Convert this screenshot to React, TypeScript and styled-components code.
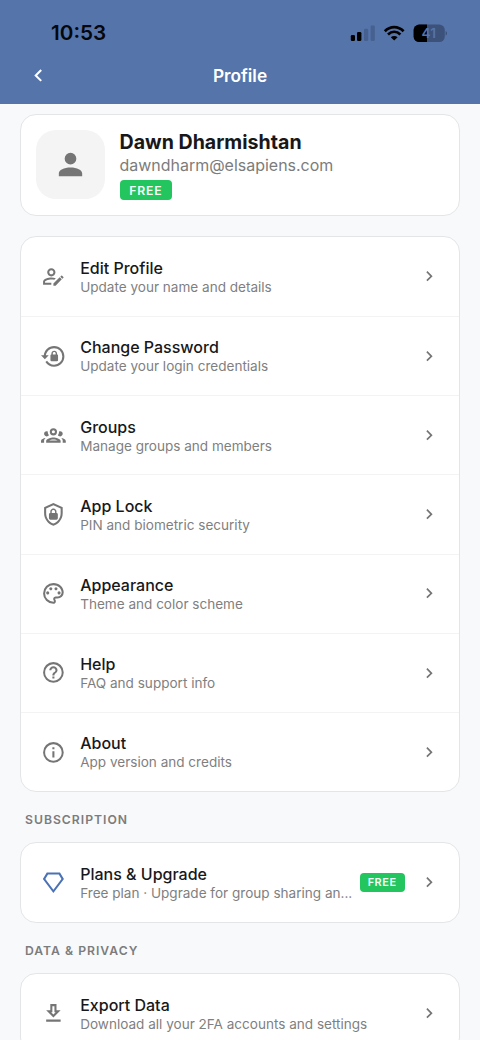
import React from 'react';
import styled, { createGlobalStyle } from 'styled-components';

const GlobalStyle = createGlobalStyle`
  * { box-sizing: border-box; }
  html, body { margin: 0; padding: 0; }
  body {
    height: 1040px;
    overflow: hidden;
    background: #f8f9fb;
    font-family: Inter, "Liberation Sans", sans-serif;
  }
`;

const icons = {
  account:
    'M12,4A4,4 0 0,1 16,8A4,4 0 0,1 12,12A4,4 0 0,1 8,8A4,4 0 0,1 12,4M12,14C16.42,14 20,15.79 20,18V20H4V18C4,15.79 7.58,14 12,14Z',
  accountEdit:
    'M2 17V20H10V18.11H3.9V17C3.9 16.36 7.03 14.9 10 14.9C10.96 14.91 11.91 15.04 12.83 15.28L14.35 13.76C12.95 13.29 11.5 13.03 10 13C7.33 13 2 14.33 2 17M10 4C7.79 4 6 5.79 6 8S7.79 12 10 12 14 10.21 14 8 12.21 4 10 4M10 10C8.9 10 8 9.11 8 8S8.9 6 10 6 12 6.9 12 8 11.11 10 10 10M21.7 13.35L20.7 14.35L18.65 12.35L19.65 11.35C19.86 11.14 20.21 11.14 20.42 11.35L21.7 12.63C21.91 12.84 21.91 13.14 21.7 13.35M12 18.94L18.06 12.88L20.11 14.88L14.11 20.95H12V18.94Z',
  lockReset:
    'M12.63,2C18.16,2 22.64,6.5 22.64,12C22.64,17.5 18.16,22 12.63,22C9.12,22 6.05,20.18 4.26,17.43L5.84,16.18C7.25,18.47 9.76,20 12.64,20A8,8 0 0,0 20.64,12A8,8 0 0,0 12.64,4C8.56,4 5.2,7.06 4.71,11H7.47L3.73,14.73L0,11H2.69C3.19,5.95 7.45,2 12.63,2M15.59,10.24C16.09,10.25 16.5,10.65 16.5,11.16V15.77C16.5,16.27 16.09,16.69 15.58,16.69H10.05C9.54,16.69 9.13,16.27 9.13,15.77V11.16C9.13,10.65 9.54,10.25 10.04,10.24V9.23C10.04,7.7 11.29,6.46 12.81,6.46C14.34,6.46 15.59,7.7 15.59,9.23V10.24M12.81,7.86C12.06,7.86 11.44,8.47 11.44,9.23V10.24H14.19V9.23C14.19,8.47 13.57,7.86 12.81,7.86Z',
  group:
    'M12,5A3.5,3.5 0 0,0 8.5,8.5A3.5,3.5 0 0,0 12,12A3.5,3.5 0 0,0 15.5,8.5A3.5,3.5 0 0,0 12,5M12,7A1.5,1.5 0 0,1 13.5,8.5A1.5,1.5 0 0,1 12,10A1.5,1.5 0 0,1 10.5,8.5A1.5,1.5 0 0,1 12,7M5.5,8A2.5,2.5 0 0,0 3,10.5C3,11.44 3.53,12.25 4.29,12.68C4.65,12.88 5.06,13 5.5,13C5.94,13 6.35,12.88 6.71,12.68C7.08,12.47 7.39,12.17 7.62,11.81C6.89,10.86 6.5,9.7 6.5,8.5C6.5,8.41 6.5,8.31 6.5,8.22C6.2,8.08 5.86,8 5.5,8M18.5,8C18.14,8 17.8,8.08 17.5,8.22C17.5,8.31 17.5,8.41 17.5,8.5C17.5,9.7 17.11,10.86 16.38,11.81C16.5,12 16.63,12.15 16.78,12.3C16.94,12.45 17.1,12.58 17.29,12.68C17.65,12.88 18.06,13 18.5,13C18.94,13 19.35,12.88 19.71,12.68C20.47,12.25 21,11.44 21,10.5A2.5,2.5 0 0,0 18.5,8M12,14C9.66,14 5,15.17 5,17.5V19H19V17.5C19,15.17 14.34,14 12,14M4.71,14.55C2.78,14.78 0,15.76 0,17.5V19H3V17.07C3,16.06 3.69,15.22 4.71,14.55M19.29,14.55C20.31,15.22 21,16.06 21,17.07V19H24V17.5C24,15.76 21.22,14.78 19.29,14.55M12,16C13.53,16 15.24,16.5 16.23,17H7.77C8.76,16.5 10.47,16 12,16Z',
  shieldLock:
    'M12,1L3,5V11C3,16.55 6.84,21.74 12,23C17.16,21.74 21,16.55 21,11V5L12,1M12,3.18L19,6.3V11C19,15.52 16.02,19.69 12,20.93C7.98,19.69 5,15.52 5,11V6.3L12,3.18M12,6.4C13.6,6.4 15,7.7 15,9.3V10.6C15.8,10.6 16.3,11.2 16.3,12V15.8C16.3,16.6 15.7,17.2 14.9,17.2H9.1C8.3,17.2 7.7,16.6 7.7,15.8V12C7.7,11.2 8.2,10.6 9,10.6V9.3C9,7.7 10.4,6.4 12,6.4M12,7.8C11.1,7.8 10.4,8.4 10.4,9.3V10.6H13.6V9.3C13.6,8.4 12.9,7.8 12,7.8Z',
  palette:
    'M12,22A10,10 0 0,1 2,12A10,10 0 0,1 12,2C17.5,2 22,6 22,11A6,6 0 0,1 16,17H14.2C13.9,17 13.7,17.2 13.7,17.5C13.7,17.6 13.8,17.7 13.8,17.8C14.2,18.3 14.4,18.9 14.4,19.5C14.5,20.9 13.4,22 12,22M12,4A8,8 0 0,0 4,12A8,8 0 0,0 12,20C12.3,20 12.5,19.8 12.5,19.5C12.5,19.3 12.4,19.2 12.4,19.1C12,18.6 11.8,18.1 11.8,17.5C11.8,16.1 12.9,15 14.3,15H16A4,4 0 0,0 20,11C20,7.1 16.4,4 12,4M6.5,10C7.3,10 8,10.7 8,11.5C8,12.3 7.3,13 6.5,13C5.7,13 5,12.3 5,11.5C5,10.7 5.7,10 6.5,10M9.5,6C10.3,6 11,6.7 11,7.5C11,8.3 10.3,9 9.5,9C8.7,9 8,8.3 8,7.5C8,6.7 8.7,6 9.5,6M14.5,6C15.3,6 16,6.7 16,7.5C16,8.3 15.3,9 14.5,9C13.7,9 13,8.3 13,7.5C13,6.7 13.7,6 14.5,6M17.5,10C18.3,10 19,10.7 19,11.5C19,12.3 18.3,13 17.5,13C16.7,13 16,12.3 16,11.5C16,10.7 16.7,10 17.5,10Z',
  help:
    'M11,18H13V16H11V18M12,2A10,10 0 0,0 2,12A10,10 0 0,0 12,22A10,10 0 0,0 22,12A10,10 0 0,0 12,2M12,20C7.59,20 4,16.41 4,12C4,7.59 7.59,4 12,4C16.41,4 20,7.59 20,12C20,16.41 16.41,20 12,20M12,6A4,4 0 0,0 8,10H10A2,2 0 0,1 12,8A2,2 0 0,1 14,10C14,12 11,11.75 11,15H13C13,12.75 16,12.5 16,10A4,4 0 0,0 12,6Z',
  info:
    'M11,9H13V7H11M12,20C7.59,20 4,16.41 4,12C4,7.59 7.59,4 12,4C16.41,4 20,7.59 20,12C20,16.41 16.41,20 12,20M12,2A10,10 0 0,0 2,12A10,10 0 0,0 12,22A10,10 0 0,0 22,12A10,10 0 0,0 12,2M11,17H13V11H11V17Z',
  diamond:
    'M5.6,2.5L1.8,8.8L12,22.2L22.2,8.8L18.4,2.5H5.6M6.8,4.4H17.2L19.8,8.7L12,19L4.2,8.7L6.8,4.4Z',
  download: 'M13,5V11H14.17L12,13.17L9.83,11H11V5H13M15,3H9V9H5L12,16L19,9H15V3M19,18H5V20H19V18Z',
  chevronRight: 'M8.59,16.58L13.17,12L8.59,7.41L10,6L16,12L10,18L8.59,16.58Z',
  chevronLeft: 'M15.41,16.58L10.83,12L15.41,7.41L14,6L8,12L14,18L15.41,16.58Z',
};

type IconName = keyof typeof icons;

const IconSvg = styled.svg<{ $size: number; $color: string }>`
  display: block;
  flex: none;
  width: ${(p) => p.$size}px;
  height: ${(p) => p.$size}px;
  fill: ${(p) => p.$color};
`;

const Icon = ({ name, size = 24.8, color = '#757575' }: { name: IconName; size?: number; color?: string }) => (
  <IconSvg viewBox="0 0 24 24" $size={size} $color={color} fillRule="evenodd">
    <path d={icons[name]} />
  </IconSvg>
);

const Screen = styled.div`
  width: 480px;
  height: 1040px;
  overflow: hidden;
  background: #f8f9fb;
`;

const Header = styled.header`
  height: 103.6px;
  background: #5574aa;
`;

const StatusBar = styled.div`
  display: flex;
  align-items: center;
  justify-content: space-between;
  height: 48px;
  padding: 17px 33px 0 51px;
`;

const Clock = styled.span`
  font-size: 20.7px;
  font-weight: 600;
  line-height: 24px;
  color: #05070b;
`;

const StatusIcons = styled.svg`
  display: block;
  width: 98px;
  height: 20px;
`;

const NavBar = styled.div`
  display: grid;
  grid-template-columns: 26px 1fr 26px;
  align-items: center;
  height: 55px;
  padding: 0 26px;
`;

const NavTitle = styled.h1`
  margin: 0;
  text-align: center;
  font-size: 17.3px;
  font-weight: 600;
  line-height: 24px;
  color: #fff;
`;

const Content = styled.main`
  display: flex;
  flex-direction: column;
  padding: 10px 20px 0;
`;

const Card = styled.section`
  flex: none;
  border: 1.2px solid #e4e5e7;
  border-radius: 16px;
  background: #fff;
`;

const ProfileCard = styled(Card)`
  display: flex;
  align-items: center;
  gap: 15px;
  height: 102px;
  margin-bottom: 20.2px;
  padding: 0 15px;
`;

const Avatar = styled.div`
  display: flex;
  align-items: center;
  justify-content: center;
  width: 68.5px;
  height: 69px;
  border-radius: 20px;
  background: #f4f4f4;
`;

const ProfileText = styled.div`
  display: flex;
  flex-direction: column;
  align-items: flex-start;
  padding-top: 1px;
`;

const UserName = styled.div`
  font-size: 19.6px;
  font-weight: 700;
  line-height: 24px;
  color: #18181a;
`;

const Email = styled.div`
  margin-bottom: 2.6px;
  font-size: 15.98px;
  line-height: 23px;
  color: #7c7c7c;
`;

const Badge = styled.span<{ $small?: boolean }>`
  flex: none;
  width: ${(p) => (p.$small ? 45 : 52.6)}px;
  height: ${(p) => (p.$small ? 18.6 : 20.4)}px;
  border-radius: 4px;
  background: #22c55e;
  color: #f4fff8;
  text-align: center;
  font-size: ${(p) => (p.$small ? 10.9 : 12.2)}px;
  font-weight: 600;
  line-height: ${(p) => (p.$small ? 19 : 21)}px;
  letter-spacing: ${(p) => (p.$small ? 0.55 : 0.85)}px;
`;

const Row = styled.div`
  display: flex;
  align-items: center;
  height: 79.2px;
  padding: 0 19.5px 0 19.8px;

  & + & {
    border-top: 1px solid #f3f3f4;
  }
`;

const RowText = styled.div`
  flex: 1;
  min-width: 0;
  margin-left: 14.6px;
  padding-top: 0.8px;
`;

const RowTitle = styled.div`
  font-size: 16px;
  font-weight: 500;
  line-height: 20px;
  color: #18181a;
`;

const RowSubtitle = styled.div`
  overflow: hidden;
  white-space: nowrap;
  text-overflow: ellipsis;
  font-size: 13.56px;
  line-height: 18px;
  color: #7f7f7f;
`;

const RowEnd = styled.div`
  display: flex;
  align-items: center;
  gap: 14.5px;
  margin-left: 5px;
`;

const SectionLabel = styled.h2`
  margin: 0;
  padding: 17.8px 5px 13.1px;
  font-size: 12.2px;
  font-weight: 600;
  line-height: 19px;
  letter-spacing: 1px;
  color: #7c7c7c;
`;

interface Item {
  icon: IconName;
  title: string;
  subtitle: string;
  accent?: boolean;
  badge?: string;
}

const menu: Item[] = [
  { icon: 'accountEdit', title: 'Edit Profile', subtitle: 'Update your name and details' },
  { icon: 'lockReset', title: 'Change Password', subtitle: 'Update your login credentials' },
  { icon: 'group', title: 'Groups', subtitle: 'Manage groups and members' },
  { icon: 'shieldLock', title: 'App Lock', subtitle: 'PIN and biometric security' },
  { icon: 'palette', title: 'Appearance', subtitle: 'Theme and color scheme' },
  { icon: 'help', title: 'Help', subtitle: 'FAQ and support info' },
  { icon: 'info', title: 'About', subtitle: 'App version and credits' },
];

const MenuRow = ({ icon, title, subtitle, accent, badge }: Item) => (
  <Row>
    <Icon name={icon} color={accent ? '#4a72b5' : undefined} />
    <RowText>
      <RowTitle>{title}</RowTitle>
      <RowSubtitle>{subtitle}</RowSubtitle>
    </RowText>
    <RowEnd>
      {badge && <Badge $small>{badge}</Badge>}
      <Icon name="chevronRight" size={20.4} />
    </RowEnd>
  </Row>
);

export default function App() {
  return (
    <Screen>
      <GlobalStyle />
      <Header>
        <StatusBar>
          <Clock>10:53</Clock>
          <StatusIcons viewBox="0 0 98 20">
            <rect x="1.8" y="12" width="4.2" height="6" rx="1.3" />
            <rect x="8" y="9" width="4.4" height="9" rx="1.3" />
            <rect x="15" y="5.8" width="4.2" height="12.2" rx="1.3" fill="#46608f" />
            <rect x="21.6" y="2.6" width="4.2" height="15.4" rx="1.3" fill="#46608f" />
            <g fill="none" stroke="#000" strokeWidth="2.7">
              <path d="M35.8 8.2C41.2 2.7 49.2 2.7 54.6 8.2" />
              <path d="M39 11.6C42.8 8 47.6 8 51.4 11.6" />
            </g>
            <path d="M41.8 14.2C43.7 12.6 46.7 12.6 48.6 14.2L45.2 17.6Z" />
            <rect x="64.6" y="1.5" width="31.2" height="17.6" rx="5.6" fill="#3c527b" />
            <path d="M78 1.5V19.1H70.2A5.6 5.6 0 0 1 64.6 13.5V7.1A5.6 5.6 0 0 1 70.2 1.5Z" />
            <path d="M96.6 8C98.6 8.8 98.6 11.8 96.6 12.6Z" fill="#3c527b" />
            <text x="79.8" y="15.2" textAnchor="middle" fontSize="13.6" fontWeight="600" fill="#5574aa">
              41
            </text>
          </StatusIcons>
        </StatusBar>
        <NavBar>
          <Icon name="chevronLeft" color="#fff" />
          <NavTitle>Profile</NavTitle>
        </NavBar>
      </Header>
      <Content>
        <ProfileCard>
          <Avatar>
            <Icon name="account" size={35} />
          </Avatar>
          <ProfileText>
            <UserName>Dawn Dharmishtan</UserName>
            <Email>dawndharm@elsapiens.com</Email>
            <Badge>FREE</Badge>
          </ProfileText>
        </ProfileCard>
        <Card>
          {menu.map((item) => (
            <MenuRow key={item.title} {...item} />
          ))}
        </Card>
        <SectionLabel>SUBSCRIPTION</SectionLabel>
        <Card>
          <MenuRow
            icon="diamond"
            title="Plans & Upgrade"
            subtitle="Free plan · Upgrade for group sharing an..."
            accent
            badge="FREE"
          />
        </Card>
        <SectionLabel>DATA &amp; PRIVACY</SectionLabel>
        <Card>
          <MenuRow icon="download" title="Export Data" subtitle="Download all your 2FA accounts and settings" />
        </Card>
      </Content>
    </Screen>
  );
}
